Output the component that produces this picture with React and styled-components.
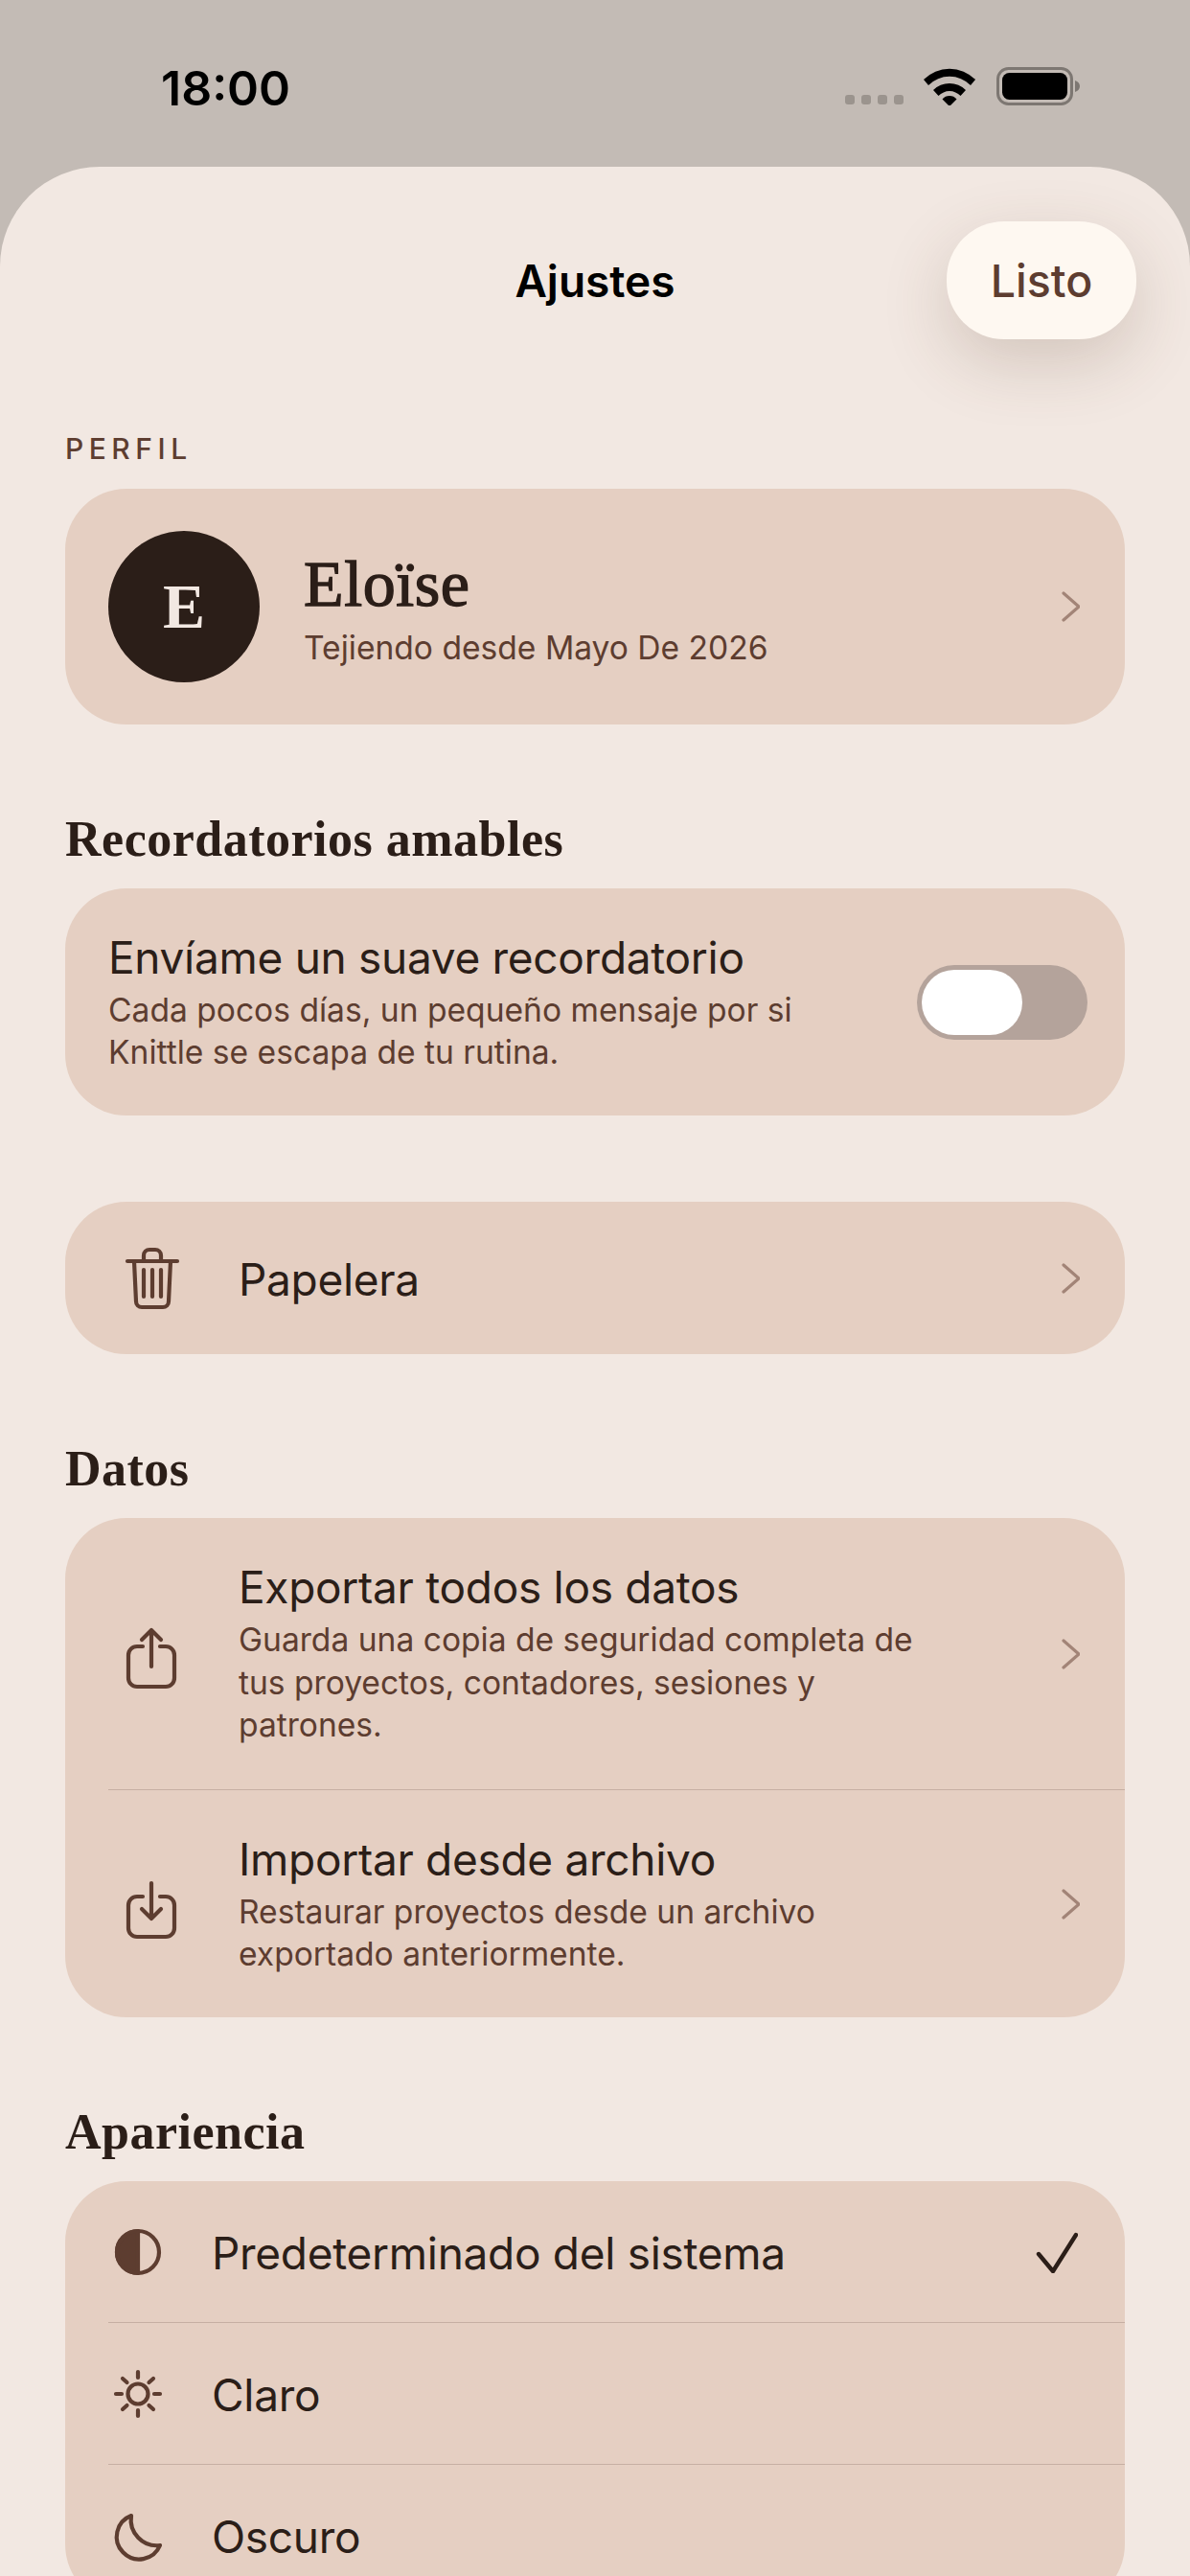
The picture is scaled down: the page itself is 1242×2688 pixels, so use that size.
import React from "react";
import styled, { createGlobalStyle } from "styled-components";

const SANS = `Inter, "Liberation Sans", sans-serif`;
const SERIF = `"Liberation Serif", serif`;

const GlobalStyle = createGlobalStyle`
	html, body {
		margin: 0;
		padding: 0;
		height: 2688px;
		overflow: hidden;
		background-color: #c3bbb5;
	}

	* {
		box-sizing: border-box;
	}
`;

const Screen = styled.div`
	width: 1242px;
	height: 2688px;
	overflow: hidden;
	display: flex;
	flex-direction: column;
	font-family: ${SANS};
`;

const StatusBar = styled.div`
	flex: none;
	height: 174px;
	padding: 62px 115px 0 168px;
	display: flex;
	justify-content: space-between;
	align-items: flex-start;
`;

const Clock = styled.span`
	font-size: 50px;
	line-height: 60px;
	font-weight: 600;
	color: #000;
`;

const StatusIcons = styled.div`
	display: flex;
	align-items: flex-start;
	margin-top: 8px;
`;

const Sheet = styled.div`
	flex: 1;
	padding: 57px 68px 0;
	border-radius: 104px 104px 0 0;
	background-color: #f2e8e2;
`;

const Header = styled.div`
	display: grid;
	grid-template-columns: 1fr auto 1fr;
	align-items: center;
	margin: 0 -12px;
`;

const Title = styled.h1`
	margin: 0;
	font-size: 46px;
	line-height: 60px;
	font-weight: 600;
	color: #000;
`;

const DoneButton = styled.button`
	justify-self: end;
	width: 198px;
	height: 123px;
	border: 0;
	border-radius: 60px;
	background-color: #fef8f1;
	box-shadow: 0 24px 70px rgba(90, 60, 40, 0.2);
	font-family: inherit;
	font-size: 46.5px;
	font-weight: 500;
	color: #5d3d30;
`;

const Eyebrow = styled.div`
	margin: 97px 0 25px;
	font-size: 30px;
	line-height: 34px;
	font-weight: 500;
	letter-spacing: 5.5px;
	color: #5d3d30;
`;

const SectionTitle = styled.h2`
	margin: 90px 0 21px;
	font-family: ${SERIF};
	font-size: 52px;
	line-height: 60px;
	font-weight: 700;
	letter-spacing: 0.5px;
	color: #2b1e18;
`;

const Card = styled.div`
	margin-top: ${({ $gap }) => $gap || 0}px;
	border-radius: 64px;
	background-color: #e5cfc2;
	overflow: hidden;
`;

const Row = styled.div`
	height: ${({ $height }) => $height}px;
	padding: 0 47px 0 45px;
	display: flex;
	align-items: center;
	gap: 46px;
`;

const Avatar = styled.div`
	flex: none;
	width: 158px;
	height: 158px;
	border-radius: 50%;
	background-color: #2b1e18;
	display: flex;
	align-items: center;
	justify-content: center;
	font-family: ${SERIF};
	font-size: 66px;
	font-weight: 700;
	color: #f2e8e2;
`;

const Texts = styled.div`
	flex: 1;
	min-width: 0;
`;

const Name = styled.div`
	padding-top: 4px;
	font-family: ${SERIF};
	font-size: 68px;
	line-height: 76px;
	letter-spacing: 0.6px;
	color: #2b1e18;
	-webkit-text-stroke: 1.4px #2b1e18;
`;

const RowTitle = styled.div`
	padding-top: 2px;
	font-size: 46px;
	line-height: 52px;
	letter-spacing: -0.3px;
	color: #2b1e18;
`;

const RowSub = styled.div`
	margin-top: 7px;
	max-width: ${({ $max }) => $max || 740}px;
	font-size: 33.6px;
	line-height: 44.5px;
	color: #5d3d30;
`;

const Separator = styled.div`
	height: 1px;
	margin-left: 45px;
	background-color: #c6afa3;
`;

const Switch = styled.div`
	flex: none;
	width: 178px;
	height: 78px;
	margin-right: -8px;
	padding: 5px;
	border-radius: 39px;
	background-color: #b4a39b;
`;

const Knob = styled.div`
	width: 105px;
	height: 68px;
	border-radius: 34px;
	background-color: #fff;
`;

const IconBox = styled.svg`
	flex: none;
	width: ${({ $size }) => $size}px;
	height: ${({ $size }) => $size}px;
	fill: none;
	stroke: #5d3d30;
	stroke-width: 4.2;
	stroke-linecap: round;
	stroke-linejoin: round;
`;

const Wifi = () => (
	<svg width="54" height="40" viewBox="0 0 54 40" style={{ marginLeft: 21 }}>
		<path d="M0 13 A38 38 0 0 1 54 13 L49 19 A31 31 0 0 0 5 19Z" fill="#000" />
		<path d="M10 24 A24 24 0 0 1 44 24 L38.5 30 A16 16 0 0 0 15.5 30Z" fill="#000" />
		<path d="M19.5 33.5 A10 10 0 0 1 34.5 33.5 L27 41Z" fill="#000" />
	</svg>
);

const SignalDots = () => (
	<svg width="61" height="10" viewBox="0 0 61 10" style={{ marginTop: 29 }}>
		{[0, 17, 34, 51].map((x) => (
			<rect key={x} x={x} width="10" height="10" rx="3" fill="#9b948e" />
		))}
	</svg>
);

const Battery = () => (
	<svg width="87" height="40" viewBox="0 0 87 40" style={{ marginLeft: 22 }}>
		<rect x="1.5" y="1.5" width="77" height="37" rx="11" fill="none" stroke="#7d7772" strokeWidth="3" />
		<rect x="6" y="6" width="68" height="28" rx="7.5" fill="#000" />
		<path d="M82 14 C85 15 87 17 87 20 C87 23 85 25 82 26Z" fill="#7d7772" />
	</svg>
);

const Chevron = () => (
	<svg width="20" height="32" viewBox="0 0 20 32" fill="none" stroke="#a28477" strokeWidth="3.2" strokeLinecap="round" strokeLinejoin="round">
		<path d="M3 2 L19 16 L3 30" />
	</svg>
);

const Check = () => (
	<svg width="44" height="44" viewBox="0 0 44 44" fill="none" stroke="#2b1e18" strokeWidth="4.4" strokeLinecap="round" strokeLinejoin="round" style={{ marginRight: 2 }}>
		<path d="M3 24 L18 42 L42 4" />
	</svg>
);

const TrashIcon = () => (
	<IconBox $size={90} viewBox="0 0 90 90">
		<path d="M20 27 H72" />
		<path d="M37 27 V21 A6 6 0 0 1 43 15 H49 A6 6 0 0 1 55 21 V27" />
		<path d="M27 27 L29 69 A6 6 0 0 0 35 75 H57 A6 6 0 0 0 63 69 L65 27" />
		<path d="M37 36 V64 M46 36 V64 M55 36 V64" />
	</IconBox>
);

const ExportIcon = () => (
	<IconBox $size={90} viewBox="0 0 90 90">
		<path d="M36 37 H30 A9 9 0 0 0 21 46 V70 A9 9 0 0 0 30 79 H60 A9 9 0 0 0 69 70 V46 A9 9 0 0 0 60 37 H54" />
		<path d="M45 58 V20 M35 30 L45 20 L55 30" />
	</IconBox>
);

const ImportIcon = () => (
	<IconBox $size={90} viewBox="0 0 90 90">
		<path d="M36 37 H30 A9 9 0 0 0 21 46 V70 A9 9 0 0 0 30 79 H60 A9 9 0 0 0 69 70 V46 A9 9 0 0 0 60 37 H54" />
		<path d="M45 23 V60 M35 50 L45 60 L55 50" />
	</IconBox>
);

const ContrastIcon = () => (
	<IconBox $size={62} viewBox="0 0 62 62">
		<circle cx="31" cy="31" r="22" />
		<path d="M31 9 A22 22 0 0 0 31 53Z" fill="#5d3d30" />
	</IconBox>
);

const SunIcon = () => (
	<IconBox $size={62} viewBox="0 0 62 62">
		<circle cx="31" cy="31" r="10.5" />
		<path d="M31 8 V14 M31 48 V54 M8 31 H14 M48 31 H54 M15 15 L19.5 19 M47 15 L42.5 19 M15 47 L19.5 43 M47 47 L42.5 43" />
	</IconBox>
);

const MoonIcon = () => (
	<IconBox $size={62} viewBox="0 0 62 62">
		<path d="M24 10 A23.5 23.5 0 1 0 54 41 A27 27 0 0 1 24 10Z" />
	</IconBox>
);

const App = () => (
	<Screen>
		<GlobalStyle />

		<StatusBar>
			<Clock>18:00</Clock>
			<StatusIcons>
				<SignalDots />
				<Wifi />
				<Battery />
			</StatusIcons>
		</StatusBar>

		<Sheet>
			<Header>
				<span />
				<Title>Ajustes</Title>
				<DoneButton>Listo</DoneButton>
			</Header>

			<Eyebrow>PERFIL</Eyebrow>
			<Card>
				<Row $height={246}>
					<Avatar>E</Avatar>
					<Texts>
						<Name>Eloïse</Name>
						<RowSub>Tejiendo desde Mayo De 2026</RowSub>
					</Texts>
					<Chevron />
				</Row>
			</Card>

			<SectionTitle>Recordatorios amables</SectionTitle>
			<Card>
				<Row $height={237}>
					<Texts>
						<RowTitle>Envíame un suave recordatorio</RowTitle>
						<RowSub $max={760}>
							Cada pocos días, un pequeño mensaje por si Knittle se escapa de tu rutina.
						</RowSub>
					</Texts>
					<Switch>
						<Knob />
					</Switch>
				</Row>
			</Card>

			<Card $gap={90}>
				<Row $height={159}>
					<TrashIcon />
					<Texts>
						<RowTitle>Papelera</RowTitle>
					</Texts>
					<Chevron />
				</Row>
			</Card>

			<SectionTitle>Datos</SectionTitle>
			<Card>
				<Row $height={283}>
					<ExportIcon />
					<Texts>
						<RowTitle>Exportar todos los datos</RowTitle>
						<RowSub>
							Guarda una copia de seguridad completa de tus proyectos, contadores, sesiones y patrones.
						</RowSub>
					</Texts>
					<Chevron />
				</Row>
				<Separator />
				<Row $height={237}>
					<ImportIcon />
					<Texts>
						<RowTitle>Importar desde archivo</RowTitle>
						<RowSub $max={640}>
							Restaurar proyectos desde un archivo exportado anteriormente.
						</RowSub>
					</Texts>
					<Chevron />
				</Row>
			</Card>

			<SectionTitle>Apariencia</SectionTitle>
			<Card>
				<Row $height={147}>
					<ContrastIcon />
					<Texts>
						<RowTitle>Predeterminado del sistema</RowTitle>
					</Texts>
					<Check />
				</Row>
				<Separator />
				<Row $height={147}>
					<SunIcon />
					<Texts>
						<RowTitle>Claro</RowTitle>
					</Texts>
				</Row>
				<Separator />
				<Row $height={147}>
					<MoonIcon />
					<Texts>
						<RowTitle>Oscuro</RowTitle>
					</Texts>
				</Row>
			</Card>
		</Sheet>
	</Screen>
);

export default App;
